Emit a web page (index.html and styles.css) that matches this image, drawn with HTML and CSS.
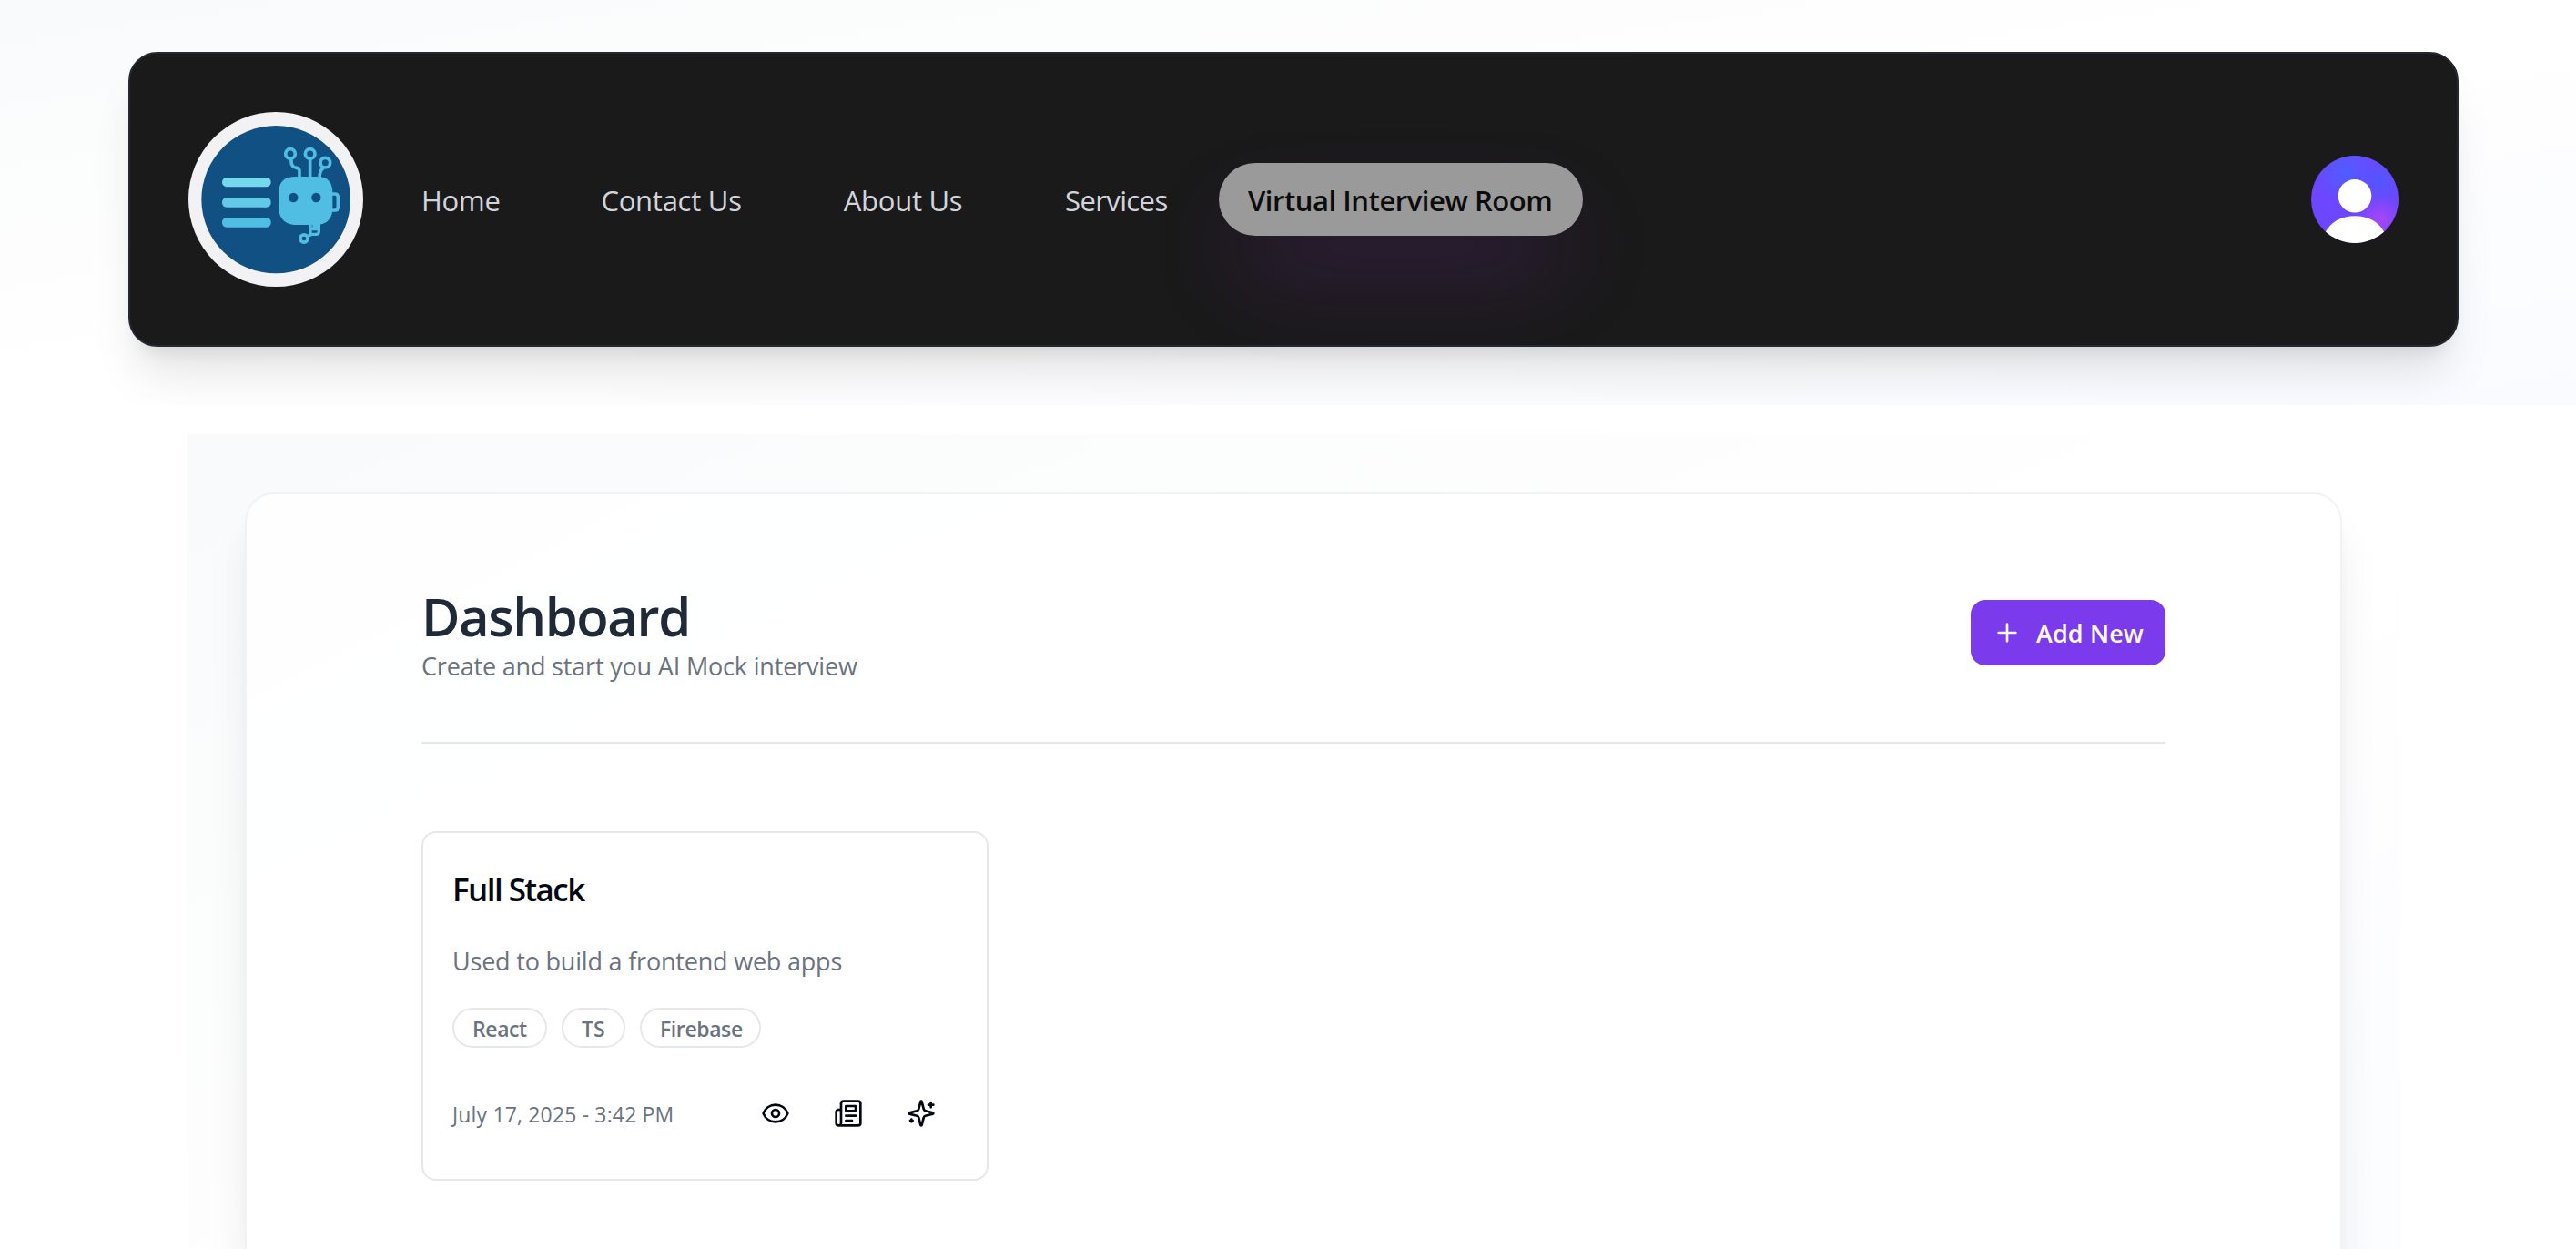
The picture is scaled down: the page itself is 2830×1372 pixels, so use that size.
FILE: index.html
```html
<!DOCTYPE html>
<html lang="en">
<head>
<meta charset="utf-8">
<title>Dashboard</title>
<link rel="stylesheet" href="styles.css">
</head>
<body>
<header class="site-header">
  <div class="navbar">
    <svg class="logo" viewBox="51 39 576 576" aria-label="Logo">
      <circle cx="339" cy="327" r="288" fill="#f2f2f5"/>
      <ellipse cx="339.500" cy="327.500" rx="245.500" ry="243.500" fill="#115083"/>
      <rect x="162" y="255" width="161" height="31" rx="15" fill="#75d8ef"/>
      <rect x="162" y="321" width="161" height="32" rx="15" fill="#62c9e8"/>
      <rect x="162" y="387" width="161" height="32" rx="15" fill="#50bde3"/>
      <g fill="none" stroke="#50bde3" stroke-width="11">
        <circle cx="387" cy="177" r="16"/>
        <circle cx="452" cy="177" r="16"/>
        <circle cx="502" cy="206" r="16"/>
        <path d="M390 196v8q1 17 18 19q9 1 9 11v22M452 196v60M496 223q-13 8-13 33M521 309h13q10 0 10 12v29q0 13-10 13h-13" />
        <path d="M453 408v34h19q9 0 9-10v-24M455 425h24M455 444l-10 3" stroke-width="10"/>
        <circle cx="432" cy="456" r="12.500"/>
      </g>
      <path d="M460 405h18v21h-18z" fill="#50bde3"/>
      <path d="M400 252h76q48 0 50 50v62q-5 42-46 47h-82q-45-6-49-50v-60q1-47 51-49z" fill="#50bde3"/>
      <circle cx="397" cy="321" r="15.500" fill="#115083"/>
      <circle cx="472" cy="321" r="15.500" fill="#115083"/>
    </svg>
    <nav class="links">
      <a class="link">Home</a>
      <a class="link link-contact">Contact Us</a>
      <a class="link">About Us</a>
      <a class="link link-services">Services</a>
      <a class="link link-active">Virtual Interview Room</a>
    </nav>
    <svg class="avatar" viewBox="0 0 96 96" aria-label="Account">
      <defs>
        <clipPath id="round"><circle cx="48" cy="48" r="48"/></clipPath>
        <radialGradient id="blue" gradientUnits="userSpaceOnUse" cx="37" cy="18" r="34"><stop offset="0" stop-color="#4d5eff"/><stop offset="1" stop-color="#4d5eff" stop-opacity="0"/></radialGradient>
        <radialGradient id="sky" gradientUnits="userSpaceOnUse" cx="76" cy="27" r="26"><stop offset="0" stop-color="#5257ff"/><stop offset="1" stop-color="#5257ff" stop-opacity="0"/></radialGradient>
        <radialGradient id="pink" gradientUnits="userSpaceOnUse" cx="76" cy="71" r="27"><stop offset="0" stop-color="#a946f9"/><stop offset="1" stop-color="#a946f9" stop-opacity="0"/></radialGradient>
      </defs>
      <g clip-path="url(#round)">
        <rect width="96" height="96" fill="#6c47ff"/>
        <rect width="96" height="96" fill="url(#blue)"/>
        <rect width="96" height="96" fill="url(#sky)"/>
        <rect width="96" height="96" fill="url(#pink)"/>
        <circle cx="48" cy="44.300" r="18.300" fill="#fff"/>
        <path d="M14 88C19 74 32 66.300 48 66.300S77 74 82 88v10H14z" fill="#fff"/>
      </g>
    </svg>
  </div>
</header>
<main class="page">
  <section class="panel">
    <div class="panel-head">
      <div>
        <h1 class="title">Dashboard</h1>
        <p class="subtitle">Create and start you AI Mock interview</p>
      </div>
      <button class="add">
        <svg class="icon" viewBox="0 0 24 24"><path d="M5 12h14M12 5v14"/></svg>
        <span>Add New</span>
      </button>
    </div>
    <div class="cards">
      <article class="card">
        <h2 class="card-title">Full Stack</h2>
        <p class="card-text">Used to build a frontend web apps</p>
        <div class="badges">
          <span class="badge badge-react">React</span>
          <span class="badge badge-ts">TS</span>
          <span class="badge badge-firebase">Firebase</span>
        </div>
        <div class="card-foot">
          <time class="date">July 17, 2025 - 3:42 PM</time>
          <div class="actions">
            <svg class="icon" viewBox="0 0 24 24"><path d="M2.062 12.348a1 1 0 0 1 0-.696 10.750 10.750 0 0 1 19.876 0 1 1 0 0 1 0 .696 10.750 10.750 0 0 1-19.876 0"/><circle cx="12" cy="12" r="3"/></svg>
            <svg class="icon" viewBox="0 0 24 24"><path d="M4 22h16a2 2 0 0 0 2-2V4a2 2 0 0 0-2-2H8a2 2 0 0 0-2 2v16a2 2 0 0 1-2 2Zm0 0a2 2 0 0 1-2-2v-9c0-1.100.9-2 2-2h2"/><path d="M18 14h-8M15 18h-5M10 6h8v4h-8V6Z"/></svg>
            <svg class="icon" viewBox="0 0 24 24"><path d="M9.937 15.500A2 2 0 0 0 8.500 14.063l-6.135-1.582a.5.5 0 0 1 0-.962L8.500 9.936A2 2 0 0 0 9.937 8.500l1.582-6.135a.5.5 0 0 1 .963 0L14.063 8.500A2 2 0 0 0 15.500 9.937l6.135 1.581a.5.5 0 0 1 0 .964L15.500 14.063a2 2 0 0 0-1.437 1.437l-1.582 6.135a.5.5 0 0 1-.963 0z"/><path d="M20 3v4M22 5h-4M4 17v2M5 18H3"/></svg>
          </div>
        </div>
      </article>
    </div>
  </section>
</main>
</body>
</html>
```
FILE: styles.css
```css
* {
  box-sizing: border-box;
  margin: 0;
  padding: 0;
}

body {
  height: 1372px;
  overflow: hidden;
  background: #fff;
  color: #030712;
  font-family: "Open Sans", "Noto Sans", sans-serif;
}

.site-header {
  height: 445px;
  padding: 57px 129px 0 141px;
  overflow: hidden;
  background: linear-gradient(to bottom right, #f9fafb, #fff 50%, #fafbff);
}

.navbar {
  display: flex;
  align-items: center;
  height: 324px;
  padding: 0 64px;
  border: 2px solid #242834;
  border-radius: 32px;
  background: #1a1a1a;
  box-shadow: 0 40px 50px -10px rgba(0, 0, 0, .1), 0 16px 20px -12px rgba(0, 0, 0, .1);
}

.logo {
  width: 192px;
  height: 192px;
}

.links {
  display: grid;
  grid-template-columns: 197.400px 266.300px 243.300px 169px 400px;
  margin-left: 64px;
}

.link {
  padding-top: 2px;
  color: #d1d5db;
  font-size: 31px;
  line-height: 78px;
  letter-spacing: -.25px;
  white-space: nowrap;
}

.link-services {
  letter-spacing: -.6px;
}

.link-active {
  height: 80px;
  padding-left: 32px;
  border-radius: 40px;
  background: #9a9a9a;
  color: #0c0c0c;
  font-weight: 600;
  letter-spacing: -.45px;
  box-shadow: 0 50px 100px -24px rgba(168, 55, 240, .36);
}

.avatar {
  width: 96px;
  height: 96px;
  margin-left: auto;
}

.page {
  height: 895px;
  margin: 32px 193px 0 205px;
  padding: 64px 64px 0;
  overflow: hidden;
  background: linear-gradient(to bottom right, #f9fafb, #fff 50%, #fafbff) 0 0 / 100% 1250px no-repeat;
}

.panel {
  height: 831px;
  padding: 99px 192px 0;
  border: 2px solid #f1f2f5;
  border-bottom: 0;
  border-radius: 32px 32px 0 0;
  background: rgba(255, 255, 255, .8);
  box-shadow: 0 40px 50px -10px rgba(0, 0, 0, .1), 0 16px 20px -12px rgba(0, 0, 0, .1);
}

.panel-head {
  display: flex;
  justify-content: space-between;
  align-items: flex-start;
  height: 175px;
  border-bottom: 2px solid #e5e7eb;
}

.title {
  color: #1f2937;
  font-size: 58px;
  font-weight: 600;
  line-height: 70px;
  letter-spacing: -1.400px;
}

.subtitle {
  color: #6b7280;
  font-size: 27px;
  line-height: 40px;
  letter-spacing: -.18px;
}

.add {
  display: flex;
  align-items: center;
  gap: 16px;
  width: 214px;
  height: 72px;
  margin-top: 17px;
  padding-left: 24px;
  border: 0;
  border-radius: 16px;
  background: #7c3aed;
  color: #f9fafb;
  font: 600 27px "Open Sans", "Noto Sans", sans-serif;
  letter-spacing: .1px;
  white-space: nowrap;
}

.icon {
  flex: none;
  width: 32px;
  height: 32px;
  fill: none;
  stroke: currentColor;
  stroke-width: 2;
  stroke-linecap: round;
  stroke-linejoin: round;
}

.cards {
  display: grid;
  grid-template-columns: repeat(3, 1fr);
  gap: 24px;
  margin-top: 96px;
}

.card {
  height: 384px;
  padding: 44px 32px 0;
  border: 2px solid #e5e7eb;
  border-radius: 16px;
  background: #fff;
}

.card-title {
  font-size: 35px;
  font-weight: 600;
  line-height: 36px;
  letter-spacing: -1.570px;
}

.card-text {
  margin-top: 41px;
  color: #6b7280;
  font-size: 27px;
  line-height: 40px;
  letter-spacing: -.2px;
}

.badges {
  display: flex;
  gap: 16px;
  margin-top: 31px;
}

.badge {
  height: 44px;
  padding: 1px 0 0 20px;
  border: 2px solid #e5e7eb;
  border-radius: 22px;
  color: #6b7280;
  font-size: 23px;
  font-weight: 600;
  line-height: 40px;
  letter-spacing: -.4px;
}

.badge-react {
  width: 104px;
}

.badge-ts {
  width: 70px;
  letter-spacing: 0;
}

.badge-firebase {
  width: 133px;
}

.card-foot {
  display: flex;
  justify-content: space-between;
  align-items: center;
  height: 32px;
  margin-top: 56px;
}

.date {
  padding-top: 2px;
  color: #6b7280;
  font-size: 23px;
  line-height: 32px;
  letter-spacing: .16px;
}

.actions {
  display: flex;
  gap: 48px;
  margin-right: 24px;
}
```
